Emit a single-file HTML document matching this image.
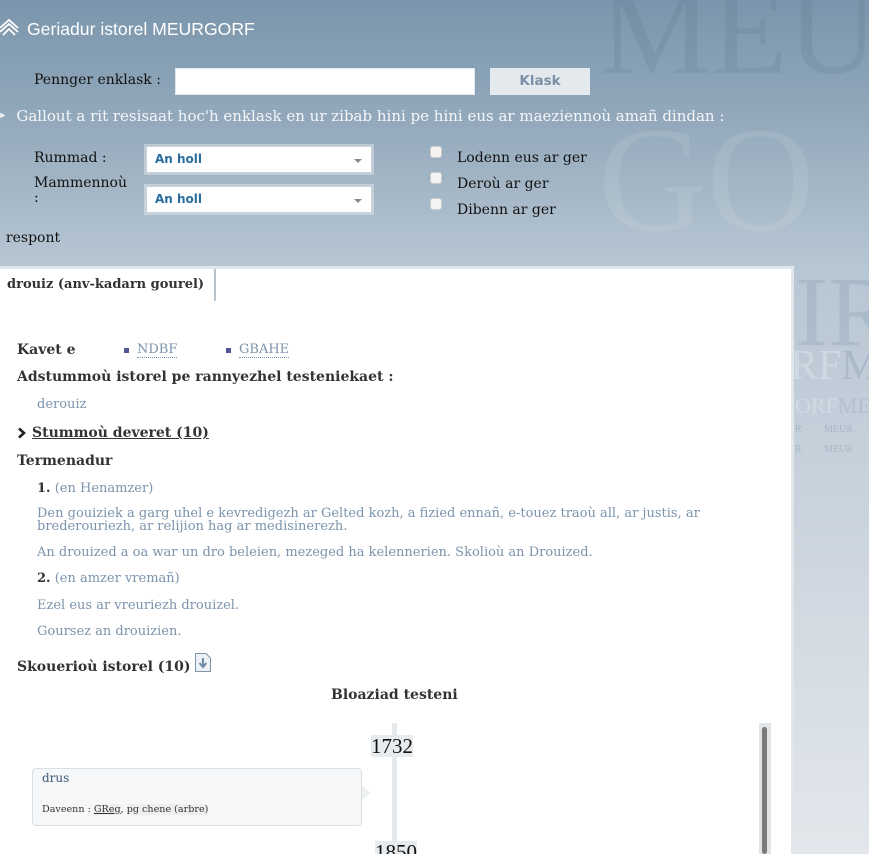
<!DOCTYPE html>
<html><head><meta charset="utf-8"><style>
*{margin:0;padding:0;box-sizing:border-box}
html,body{width:869px;height:854px;overflow:hidden}
body{position:relative;font-family:"DejaVu Serif","Liberation Serif",serif;background:linear-gradient(180deg,#7a95ac 0px,#93a9bb 120px,#b7c6d3 265px,#c9d3dd 500px,#e3e7ec 854px);}
.wm{position:absolute;font-family:"Liberation Serif",serif;color:rgba(90,110,135,0.18);line-height:1}
.t{position:absolute;white-space:nowrap}
.sel{position:absolute;width:226px;height:27px;background:#fff;border:1px solid #c9d2db;box-shadow:0 0 0 2px rgba(255,255,255,0.35);font-family:"DejaVu Sans",sans-serif;font-weight:bold;font-size:12px;color:#2a6e9e;padding:5px 8px}
.sel:after{content:"";position:absolute;right:9px;top:12px;border:4px solid transparent;border-top:4px solid #888}
.cb{position:absolute;width:12px;height:12px;background:#f3f3f3;border:1px solid #ccc;border-radius:3px}
.main{position:absolute;left:0;top:266px;width:794px;height:588px;background:#fff;border-top:3px solid #e1e6ea;border-right:3px solid #e1e6ea}
.c{font-family:"DejaVu Serif",serif;font-size:13px;color:#7b93ab}
.b{font-weight:bold;color:#333;font-size:14px}
</style></head><body>
<div class="wm" style="left:600px;top:-30px;font-size:125px">MEU</div>
<div class="wm" style="left:598px;top:105px;font-size:150px;color:rgba(230,236,242,0.12)">GO</div>
<div class="wm" style="left:795px;top:262px;font-size:100px;color:rgba(90,110,135,0.15)">IR</div>
<div class="wm" style="left:790px;top:345px;font-size:42px;color:rgba(255,255,255,0.25)">RF<span style="color:rgba(90,110,135,0.2)">M</span></div>
<div class="wm" style="left:795px;top:395px;font-size:22px;color:rgba(255,255,255,0.25)">ORF<span style="color:rgba(90,110,135,0.15)">MEU</span></div>
<div class="wm" style="left:795px;top:425px;font-size:10px;color:rgba(90,110,135,0.25)">R &nbsp; &nbsp; &nbsp; &nbsp; MEUR</div>
<div class="wm" style="left:795px;top:445px;font-size:10px;color:rgba(90,110,135,0.25)">R &nbsp; &nbsp; &nbsp; &nbsp; MEUR</div>

<svg style="position:absolute;left:0;top:18px" width="22" height="18" viewBox="0 0 22 18"><path d="M0 10 L9 2 L18 10 M0 14 L9 6 L18 14 M3 17 L9 11 L15 17" stroke="#fff" stroke-width="1.8" fill="none"/></svg>
<div class="t" style="left:27px;top:19px;font-family:'Liberation Sans',sans-serif;font-size:17.6px;color:#fff">Geriadur istorel MEURGORF</div>

<div class="t" style="left:34px;top:72px;font-size:14px;color:#111">Pennger enklask :</div>
<div style="position:absolute;left:175px;top:68px;width:300px;height:27px;background:#fff;border:1px solid #dfe6ec"></div>
<div style="position:absolute;left:490px;top:68px;width:100px;height:27px;background:#e4e9ee;font-family:'DejaVu Sans',sans-serif;font-weight:bold;font-size:13.5px;color:#7a90a6;text-align:center;line-height:27px">Klask</div>

<div class="t" style="left:-2px;top:107px;font-size:15px;color:#f4f6f8">‣ &nbsp;Gallout a rit resisaat hoc'h enklask en ur zibab hini pe hini eus ar maeziennoù amañ dindan :</div>

<div class="t" style="left:34px;top:150px;font-size:14px;color:#111">Rummad :</div>
<div class="t" style="left:34px;top:176px;font-size:14px;color:#111;line-height:15px">Mammennoù<br>:</div>
<div class="sel" style="left:146px;top:146px">An holl</div>
<div class="sel" style="left:146px;top:186px">An holl</div>

<div class="cb" style="left:430px;top:146px"></div>
<div class="cb" style="left:430px;top:172px"></div>
<div class="cb" style="left:430px;top:198px"></div>
<div class="t" style="left:457px;top:150px;font-size:14px;color:#111">Lodenn eus ar ger</div>
<div class="t" style="left:457px;top:176px;font-size:14px;color:#111">Deroù ar ger</div>
<div class="t" style="left:457px;top:202px;font-size:14px;color:#111">Dibenn ar ger</div>

<div class="t" style="left:-3px;top:230px;font-size:14px;color:#111">. respont</div>

<div class="main"></div>
<div style="position:absolute;left:214px;top:269px;width:2px;height:32px;background:#b8c2cb"></div>
<div class="t" style="left:7px;top:277px;font-size:13px;font-weight:bold;color:#333">drouiz (anv-kadarn gourel)</div>

<div class="t b" style="left:17px;top:342px">Kavet e</div>
<div style="position:absolute;left:124px;top:348px;width:5px;height:5px;background:#55559a"></div>
<div class="t" style="left:137px;top:342px;font-size:13px;color:#7b93ab;border-bottom:1px dotted #7b93ab;line-height:15px">NDBF</div>
<div style="position:absolute;left:226px;top:348px;width:5px;height:5px;background:#55559a"></div>
<div class="t" style="left:239px;top:342px;font-size:13px;color:#7b93ab;border-bottom:1px dotted #7b93ab;line-height:15px">GBAHE</div>

<div class="t b" style="left:17px;top:369px">Adstummoù istorel pe rannyezhel testeniekaet :</div>
<div class="t" style="left:37px;top:397px;font-size:13px;color:#7b93ab">derouiz</div>
<svg style="position:absolute;left:17px;top:427px" width="10" height="12" viewBox="0 0 10 12"><path d="M2 1.5 L7 6 L2 10.5" stroke="#222" stroke-width="2.6" fill="none"/></svg>
<div class="t b" style="left:32px;top:425px;text-decoration:underline">Stummoù deveret (10)</div>
<div class="t b" style="left:17px;top:453px">Termenadur</div>
<div class="t c" style="left:37px;top:481px"><b style="color:#333;font-size:13px">1.</b> (en Henamzer)</div>
<div class="t c" style="left:37px;top:507px;line-height:13px">Den gouiziek a garg uhel e kevredigezh ar Gelted kozh, a fizied ennañ, e-touez traoù all, ar justis, ar<br>brederouriezh, ar relijion hag ar medisinerezh.</div>
<div class="t c" style="left:37px;top:545px">An drouized a oa war un dro beleien, mezeged ha kelennerien. Skolioù an Drouized.</div>
<div class="t c" style="left:37px;top:571px"><b style="color:#333;font-size:13px">2.</b> (en amzer vremañ)</div>
<div class="t c" style="left:37px;top:598px">Ezel eus ar vreuriezh drouizel.</div>
<div class="t c" style="left:37px;top:624px">Goursez an drouizien.</div>

<div class="t b" style="left:17px;top:659px">Skouerioù istorel (10)</div>
<svg style="position:absolute;left:194px;top:652px" width="18" height="21" viewBox="0 0 18 21"><path d="M1.5 1.5 H12 L16.5 6 V19.5 H1.5 Z" fill="#eef2f6" stroke="#7e95ab"/><path d="M9 6 V14 M5.5 11 L9 15 L12.5 11" stroke="#6f8aa4" stroke-width="2" fill="none"/></svg>
<div class="t b" style="left:331px;top:687px">Bloaziad testeni</div>

<div style="position:absolute;left:392px;top:723px;width:5px;height:131px;background:#e6e9ec"></div>
<div class="t" style="left:371px;top:735px;background:#e8ebee;font-size:21px;color:#111;font-family:'Liberation Serif',serif;line-height:22px">1732</div>
<div class="t" style="left:375px;top:841px;background:#e8ebee;font-size:21px;color:#111;font-family:'Liberation Serif',serif;line-height:22px">1850</div>
<div style="position:absolute;left:32px;top:768px;width:330px;height:58px;background:#f6f7f9;border:1px solid #dadfe4;border-radius:4px"></div>
<div style="position:absolute;left:362px;top:786px;border:7px solid transparent;border-left:9px solid #eef0f2"></div>
<div class="t" style="left:42px;top:771px;font-size:12px;color:#3d5a78">drus</div>
<div class="t" style="left:42px;top:804px;font-size:9.6px;color:#333">Daveenn : <span style="background:#eee;text-decoration:underline">GReg</span>, <span style="background:#eee">pg chene (arbre)</span></div>

<div style="position:absolute;left:759px;top:723px;width:12px;height:131px;background:#e2e5e8"></div>
<div style="position:absolute;left:762px;top:727px;width:5px;height:127px;background:#7a7a7a;border-radius:3px"></div>
</body></html>
